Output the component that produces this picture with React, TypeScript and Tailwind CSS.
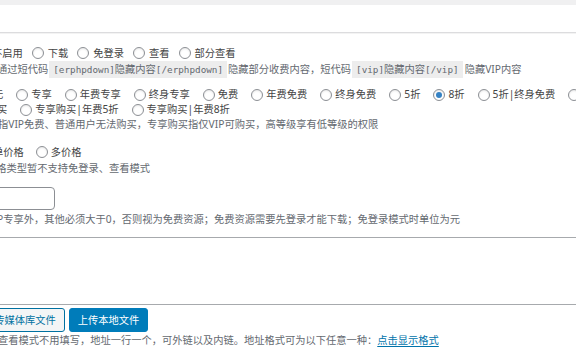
import React from 'react';

const sans = { fontFamily: '"Noto Sans", "Noto Sans CJK SC", sans-serif' };

function Radio({ checked = false }: { checked?: boolean }) {
  return (
    <span className="w-[12px] h-[12px] rounded-full border border-[#8c8f94] bg-white shrink-0 flex items-center justify-center shadow-[inset_0_1px_2px_rgba(0,0,0,0.1)]">
      {checked && <span className="w-[6px] h-[6px] rounded-full bg-[#3582c4]" />}
    </span>
  );
}

function Opt({ label, checked = false, gap = 'gap-[3px]' }: { label: string; checked?: boolean; gap?: string }) {
  return (
    <label className={`flex items-center shrink-0 ${gap}`}>
      <Radio checked={checked} />
      <span>{label}</span>
    </label>
  );
}

function Code({ pre, mid, post }: { pre: string; mid: string; post: string }) {
  return (
    <code
      className="bg-[#ededed] text-[#646970] px-[4px] mx-[1px] h-[17px] flex items-center text-[9.3px] whitespace-nowrap"
      style={{ fontFamily: '"DejaVu Sans Mono", "Noto Sans CJK SC", monospace' }}
    >
      {pre}
      <span className="text-[10.25px]" style={sans}>{mid}</span>
      {post}
    </code>
  );
}

const top = ['专享', '年费专享', '终身专享', '免费', '年费免费', '终身免费', '5折', '8折', '5折|终身免费', '8折|终身免费'];

export default function App() {
  return (
    <div className="w-[576px] h-[356px] overflow-hidden bg-white text-[#444] text-[10.25px] leading-none" style={sans}>
      {/* field above */}
      <div className="h-[5px] bg-[#f0f0f1]" />
      <div className="h-[28px] bg-white border-b border-[#dcdcde]" />
      <div className="h-[1px] bg-[#f3f3f3]" />

      {/* 下载模式 */}
      <div className="mt-[11px] h-[16px] flex items-center gap-[9px] whitespace-nowrap ml-[-8px]">
        <span className="shrink-0">不启用</span>
        <Opt label="下载" gap="gap-[4px]" />
        <Opt label="免登录" gap="gap-[4px]" />
        <Opt label="查看" gap="gap-[4px]" />
        <Opt label="部分查看" gap="gap-[4px]" />
      </div>
      <div className="h-[17px] flex items-center whitespace-nowrap ml-[-3px] text-[#646970]">
        <span className="shrink-0">通过短代码</span>
        <Code pre="[erphpdown]" mid="隐藏内容" post="[/erphpdown]" />
        <span className="shrink-0">隐藏部分收费内容，短代码</span>
        <Code pre="[vip]" mid="隐藏内容" post="[/vip]" />
        <span className="shrink-0 ml-[1px]">隐藏VIP内容</span>
      </div>

      {/* VIP 优惠 */}
      <div className="mt-[9px] h-[15px] flex items-center gap-[13px] whitespace-nowrap ml-[-7px]">
        <span className="shrink-0">无</span>
        {top.map(t => <Opt key={t} label={t} checked={t === '8折'} />)}
      </div>
      <div className="h-[15px] flex items-center gap-[13px] whitespace-nowrap ml-[-3px]">
        <span className="shrink-0">买</span>
        <Opt label="专享购买|年费5折" />
        <Opt label="专享购买|年费8折" />
      </div>
      <div className="h-[14px] flex items-center whitespace-nowrap ml-[-2px] text-[#646970]">
        指VIP免费、普通用户无法购买，专享购买指仅VIP可购买，高等级享有低等级的权限
      </div>

      {/* 价格类型 */}
      <div className="mt-[13px] h-[16px] flex items-center gap-[12px] whitespace-nowrap ml-[-7px]">
        <span className="shrink-0">单价格</span>
        <Opt label="多价格" />
      </div>
      <div className="h-[16px] flex items-center whitespace-nowrap ml-[-14px] text-[#646970]">
        价格类型暂不支持免登录、查看模式
      </div>

      {/* 价格 */}
      <input
        type="text"
        className="block mt-[11px] ml-[-60px] w-[115px] h-[23px] rounded-[4px] border border-[#8c8f94] bg-white outline-none"
      />
      <div className="mt-[1px] h-[16px] flex items-center whitespace-nowrap ml-[-3px] text-[#646970]">
        P专享外，其他必须大于0，否则视为免费资源；免费资源需要先登录才能下载；免登录模式时单位为元
      </div>

      {/* 下载地址 */}
      <textarea className="block mt-[10px] ml-[-10px] w-[600px] h-[68px] border border-[#a7aaad] bg-white outline-none resize-none" />
      <div className="mt-[3px] h-[24px] flex items-stretch gap-[4px] ml-[-25px] whitespace-nowrap">
        <button className="px-[8px] rounded-[3px] border border-[#0071a1] bg-[#f3f5f6] text-[#0071a1]">上传媒体库文件</button>
        <button className="px-[8px] rounded-[3px] border border-[#007cba] bg-[#007cba] text-white">上传本地文件</button>
      </div>
      <div className="h-[16px] flex items-center whitespace-nowrap ml-[-2px] text-[#646970]">
        查看模式不用填写，地址一行一个，可外链以及内链。地址格式可为以下任意一种：
        <a className="text-[#0073aa] underline underline-offset-2">点击显示格式</a>
      </div>
    </div>
  );
}
